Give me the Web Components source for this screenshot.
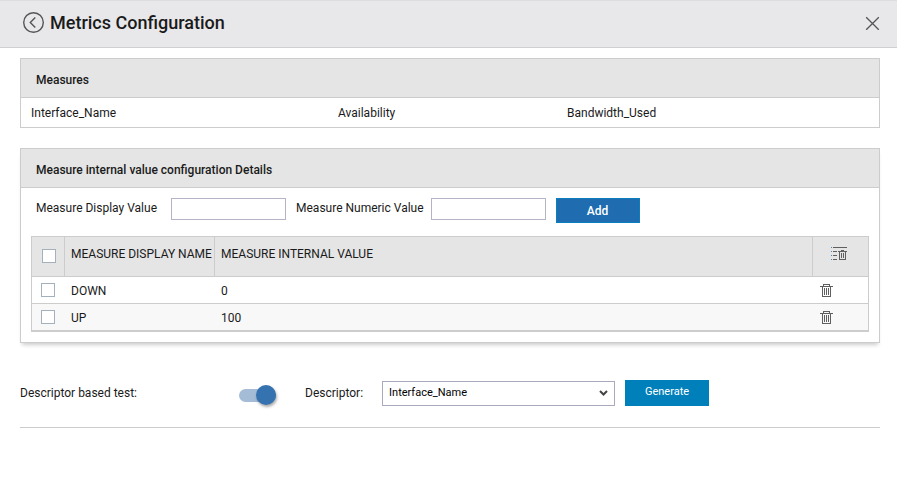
<!DOCTYPE html>
<html lang="en">
<head>
<meta charset="utf-8">
<meta name="viewport" content="width=device-width, initial-scale=1">
<title>Metrics Configuration</title>
<style>
    body {
        margin: 0;
        background: #fff;
        color: #1a1a1a;
        font: 12px/16px Roboto, "Liberation Sans", sans-serif;
    }

    main {
        display: flex;
        flex-direction: column;
        gap: 20px;
        padding: 10px 17px 20px 20px;
    }
</style>
</head>
<body>
    <page-header>Metrics Configuration</page-header>
    <main>
        <config-panel>
            <span slot="title">Measures</span>
            <measure-list items="Interface_Name,Availability,Bandwidth_Used"></measure-list>
        </config-panel>
        <config-panel raised>
            <span slot="title">Measure internal value configuration Details</span>
            <value-form></value-form>
            <value-table></value-table>
        </config-panel>
        <descriptor-bar></descriptor-bar>
    </main>

<script>
const base = `
    * {
        margin: 0;
        padding: 0;
        box-sizing: border-box;
    }

    :host {
        display: block;
    }

    button, input, select {
        font: inherit;
        border-radius: 0;
    }

    button {
        cursor: pointer;
    }

    svg {
        display: block;
    }
`;

class BaseElement extends HTMLElement {

    constructor() {
        super();
        this.shadowDOM = this.attachShadow({mode: "open"});
    }

    connectedCallback() {
        this.render();
    }
}

class PageHeader extends BaseElement {

    render() {
        this.shadowDOM.innerHTML = `
        <style>
            ${base}
            header {
                display: flex;
                align-items: center;
                height: 48px;
                padding: 0 17px 2px 22px;
                background: #e8e8ea;
                border-bottom: 1px solid #d0d0d2;
                box-shadow: inset 0 1px #dddddf;
            }

            h1 {
                flex: 1;
                margin-left: 5px;
                font-size: 18px;
                line-height: 24px;
                font-weight: 500;
            }

            button {
                border: 0;
                background: none;
            }

            svg {
                fill: none;
                stroke: #555;
            }
        </style>
        <header>
            <button type="button" aria-label="Back">
                <svg width="23" height="23" viewBox="0 0 23 23" stroke-width="1.4"><circle cx="11.5" cy="11.5" r="9.8"/><path d="M13.3 6.5L8.3 11.5L13.3 16.5"/></svg>
            </button>
            <h1><slot></slot></h1>
            <button type="button" aria-label="Close">
                <svg width="15" height="15" viewBox="0 0 15 15" stroke-width="1.3"><path d="M1.2 2.2L13.8 14.8M13.8 2.2L1.2 14.8"/></svg>
            </button>
        </header>`;
    }
}

class ConfigPanel extends BaseElement {

    render() {
        this.shadowDOM.innerHTML = `
        <style>
            ${base}
            :host {
                border: 1px solid #ccc;
            }

            :host([raised]) {
                box-shadow: 0 4px 4px -2px rgba(0, 0, 0, .2);
            }

            h2 {
                padding: 13px 15px 9px;
                background: #e5e5e5;
                border-bottom: 1px solid #ccc;
                font-size: 12px;
                line-height: 16px;
                font-weight: 500;
            }
        </style>
        <section>
            <h2><slot name="title"></slot></h2>
            <slot></slot>
        </section>`;
    }
}

class MeasureList extends BaseElement {

    render() {
        const items = this.getAttribute("items").split(",");
        this.shadowDOM.innerHTML = `
        <style>
            ${base}
            ul {
                display: grid;
                grid-template-columns: 307fr 229fr 302fr;
                padding: 7px 10px 6px;
                list-style: none;
            }
        </style>
        <ul>${items.map(item => `<li>${item}</li>`).join("")}</ul>`;
    }
}

class ValueForm extends BaseElement {

    render() {
        this.shadowDOM.innerHTML = `
        <style>
            ${base}
            form {
                display: flex;
                flex-wrap: wrap;
                align-items: flex-start;
                gap: 10px;
                padding: 10px 15px 13px;
            }

            label {
                line-height: 20px;
            }

            .field {
                display: flex;
                gap: 14px;
            }

            .field + .field {
                gap: 7px;
            }

            input {
                width: 115px;
                height: 22px;
                padding: 0 5px;
                border: 1px solid #b4b4c6;
            }

            button {
                width: 84px;
                height: 25px;
                border: 1px solid #0a7fbd;
                background: #1f6cb0;
                color: #fff;
                font-weight: 500;
            }
        </style>
        <form>
            <div class="field">
                <label for="display">Measure Display Value</label>
                <input id="display" type="text">
            </div>
            <div class="field">
                <label for="numeric">Measure Numeric Value</label>
                <input id="numeric" type="text">
            </div>
            <button type="button">Add</button>
        </form>`;
    }
}

class ValueTable extends BaseElement {

    render() {
        const rows = [["DOWN", "0"], ["UP", "100"]];
        this.shadowDOM.innerHTML = `
        <style>
            ${base}
            :host {
                padding: 0 10px;
            }

            table {
                width: 100%;
                margin-bottom: 10px;
                table-layout: fixed;
                border-collapse: separate;
                border-spacing: 0;
                border: 1px solid #ccc;
                border-bottom-width: 2px;
            }

            .check { width: 33px; }
            .name { width: 150px; }
            .action { width: 55px; }

            th, td {
                padding-left: 6px;
                text-align: left;
                font-weight: 400;
                white-space: nowrap;
            }

            th {
                height: 40px;
                padding-bottom: 6px;
                background: #e5e5e5;
                border-right: 1px solid #ccc;
                border-bottom: 1px solid #ccc;
            }

            th:first-child {
                padding: 0 0 2px 10px;
            }

            th:last-child {
                padding-left: 18px;
                border-right: 0;
            }

            td {
                height: 27px;
                padding-top: 1px;
                border-bottom: 1px solid #ccc;
            }

            td:first-child {
                padding: 0 0 0 9px;
            }

            td:last-child {
                padding-top: 0;
            }

            tbody tr:last-child td {
                height: 26px;
                background: #f8f8f8;
                border-bottom: 0;
            }

            input {
                display: block;
                appearance: none;
                width: 14px;
                height: 14px;
                background: #fff;
                border: 1px solid #a3b1bf;
            }

            input:checked {
                background: #3572b0;
            }

            button {
                display: block;
                border: 0;
                background: none;
            }
        </style>
        <table>
            <thead>
                <tr>
                    <th class="check"><input type="checkbox" aria-label="Select all"></th>
                    <th class="name">MEASURE DISPLAY NAME</th>
                    <th>MEASURE INTERNAL VALUE</th>
                    <th class="action">
                        <button type="button" aria-label="Delete selected">
                            <svg width="16" height="13" viewBox="0 0 16 13" shape-rendering="crispEdges">
                                <path fill="#5f5f5f" d="M2 0h14v1H2zM2 4h4v1H2zM2 8h4v1H2zM2 12h4v1H2zM7 4h9v1H7zM10 3h3v1h-3zM8 5h1v8H8zM14 5h1v8h-1zM8 12h7v1H8zM10 6h1v5h-1zM12 6h1v5h-1z"/>
                                <path fill="#4d86bb" d="M0 0h1v1H0zM0 4h1v1H0zM0 8h1v1H0zM0 12h1v1H0z"/>
                            </svg>
                        </button>
                    </th>
                </tr>
            </thead>
            <tbody>
                ${rows.map(([name, value]) => `
                <tr>
                    <td><input type="checkbox" aria-label="Select ${name}"></td>
                    <td>${name}</td>
                    <td>${value}</td>
                    <td>
                        <button type="button" aria-label="Delete ${name}">
                            <svg width="14" height="13" viewBox="0 0 14 13" shape-rendering="crispEdges">
                                <path fill="#5f5f5f" d="M4 0h7v1H4zM4 1h1v1H4zM10 1h1v1h-1zM1 2h13v1H1zM3 3h1v10H3zM11 3h1v10h-1zM3 12h9v1H3zM5 4h1v7H5zM7 4h1v7H7zM9 4h1v7H9z"/>
                            </svg>
                        </button>
                    </td>
                </tr>`).join("")}
            </tbody>
        </table>`;
    }
}

class DescriptorBar extends BaseElement {

    render() {
        this.shadowDOM.innerHTML = `
        <style>
            ${base}
            form {
                display: flex;
                flex-wrap: wrap;
                align-items: center;
                padding: 17px 0 21px;
                border-bottom: 1px solid #ccc;
            }

            .test {
                width: 219px;
            }

            .toggle {
                appearance: none;
                display: flex;
                align-items: center;
                width: 37px;
                height: 13px;
                margin-top: 4px;
                border-radius: 7px;
                background: #a5bcd7;
                cursor: pointer;
            }

            .toggle::before {
                content: "";
                width: 20px;
                height: 20px;
                border-radius: 50%;
                background: #fff;
                box-shadow: 1px 2px 3px rgba(0, 0, 0, .35);
            }

            .toggle:checked::before {
                margin-left: auto;
                background: #3572b0;
            }

            .field {
                display: flex;
                align-items: center;
                gap: 19px;
                margin: 0 10px 0 29px;
            }

            .select {
                display: grid;
                align-items: center;
            }

            .select > * {
                grid-area: 1 / 1;
            }

            select {
                appearance: none;
                width: 233px;
                height: 25px;
                padding: 0 24px 0 6px;
                border: 1px solid #aaaabf;
                background: #fff;
                color: #000;
                font-size: 11px;
            }

            svg {
                justify-self: end;
                margin-right: 7px;
                pointer-events: none;
            }

            button {
                width: 84px;
                height: 26px;
                padding-bottom: 3px;
                border: 0;
                background: #0080ba;
                color: #fff;
                font-size: 11px;
            }
        </style>
        <form>
            <label class="test" for="test">Descriptor based test:</label>
            <input class="toggle" id="test" type="checkbox" role="switch" checked>
            <div class="field">
                <label for="descriptor">Descriptor:</label>
                <div class="select">
                    <select id="descriptor">
                        <option>Interface_Name</option>
                        <option>Availability</option>
                        <option>Bandwidth_Used</option>
                    </select>
                    <svg width="9" height="6" viewBox="0 0 9 6"><path d="M1 1L4.5 4.5L8 1" fill="none" stroke="#444" stroke-width="2"/></svg>
                </div>
            </div>
            <button type="button">Generate</button>
        </form>`;
    }
}

customElements.define("page-header", PageHeader);
customElements.define("config-panel", ConfigPanel);
customElements.define("measure-list", MeasureList);
customElements.define("value-form", ValueForm);
customElements.define("value-table", ValueTable);
customElements.define("descriptor-bar", DescriptorBar);
</script>
</body>
</html>
